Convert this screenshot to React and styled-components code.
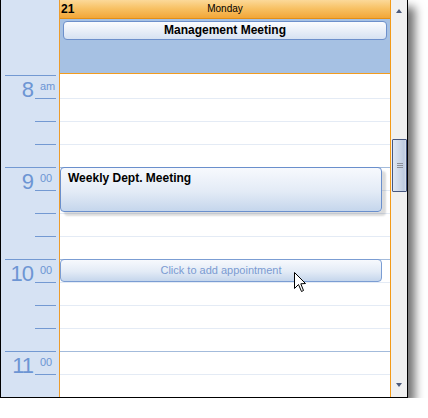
import React from "react";
import styled, { createGlobalStyle } from "styled-components";

const SLOT = 23;
const hours = [
  { n: "8", s: "am" },
  { n: "9", s: "00" },
  { n: "10", s: "00" },
  { n: "11", s: "00" },
];

const GlobalStyle = createGlobalStyle`
  * { box-sizing: border-box; }
  body {
    margin: 0;
    background: #fff;
    font-family: "Liberation Sans", Arial, sans-serif;
  }
`;

const Window = styled.div`
  width: 408px;
  height: 398px;
  display: flex;
  background: #fff;
  border: 1px solid #000;
  border-top: none;
  box-shadow: 7px 7px 9px rgba(0, 0, 0, 0.55);
`;

/* time ruler on the left */
const TimeCol = styled.div`
  width: 58px;
  flex: none;
  padding-top: 75px;
  background: #d6e2f3;
  color: #6d95d3;
  overflow: hidden;
`;

const HourBlock = styled.div`
  flex: none;
  width: 51px;
  height: 92px;
  margin-left: 4px;
  border-top: 1px solid #7399d2;
`;

const HourHead = styled.div`
  display: flex;
  height: 23px;
`;

const HourNum = styled.div`
  width: 29px;
  align-self: flex-end;
  text-align: right;
  font-size: 22px;
  line-height: 18px;
  letter-spacing: -1px;
  padding-right: 1px;
`;

const HourSuffix = styled.div`
  margin-left: 1px;
  flex: 1;
  padding: 5px 0 0 5px;
  border-bottom: 1px solid #7399d2;
  font-size: 11px;
  line-height: 11px;
`;

const Tick = styled.div`
  height: 23px;
  margin-left: 30px;
  border-bottom: 1px solid #7399d2;
`;

/* day column */
const DayCol = styled.div`
  width: 332px;
  flex: none;
  display: flex;
  flex-direction: column;
  border-left: 1px solid #eb9b2c;
  border-right: 1px solid #f39a16;
  overflow: hidden;
`;

const DayHeader = styled.div`
  height: 19px;
  flex: none;
  display: grid;
  grid-template-columns: 1fr auto 1fr;
  align-items: center;
  padding: 0 1px;
  border-bottom: 1px solid #e48f16;
  background: linear-gradient(#fcd999, #f8c266 45%, #f2a638);
  line-height: 18px;
  color: #000;
`;

const DayNum = styled.span`
  font-size: 12px;
  font-weight: bold;
`;

const DayName = styled.span`
  font-size: 10px;
`;

const AllDay = styled.div`
  height: 55px;
  flex: none;
  padding: 2px 3px 0;
  background: #a6c1e3;
  border-bottom: 1px solid #f39c1e;
`;

const Banner = styled.div`
  height: 19px;
  border: 1px solid #6d90cb;
  border-radius: 4px;
  background: linear-gradient(#fbfcfe, #e9eff8 50%, #d6e2f2);
  text-align: center;
  font-size: 12px;
  font-weight: bold;
  line-height: 17px;
  color: #000;
`;

const Grid = styled.div`
  position: relative;
  flex: 1;
  padding-top: 1px;
`;

const Slot = styled.div`
  height: ${SLOT}px;
  border-top: 1px solid ${(p) => (p.$first ? "#fff" : p.$hour ? "#a3bbdb" : "#e4ebf5")};
`;

const Appt = styled.div`
  position: absolute;
  left: 0;
  width: 322px;
  border: 1px solid ${(p) => (p.$ghost ? "#7b9dd3" : "#6a8fcc")};
  border-radius: 4px;
  background: linear-gradient(#f7f9fd, #e3ebf6 55%, #c5d6ec);
  box-shadow: ${(p) => (p.$ghost ? "none" : "4px 4px 2px rgba(0, 0, 0, 0.14)")};
  font-size: ${(p) => (p.$ghost ? "11px" : "12px")};
  font-weight: ${(p) => (p.$ghost ? "normal" : "bold")};
  color: ${(p) => (p.$ghost ? "#7b9bd2" : "#000")};
  text-align: ${(p) => (p.$ghost ? "center" : "left")};
  line-height: ${(p) => (p.$ghost ? "20px" : "14px")};
  padding: ${(p) => (p.$ghost ? "0" : "3px 7px")};
`;

const Pointer = styled.svg`
  position: absolute;
  left: 234px;
  top: 198px;
`;

/* scrollbar */
const Scroll = styled.div`
  width: 16px;
  flex: none;
  display: flex;
  flex-direction: column;
  background: #f0f0f0;
`;

const ArrowBtn = styled.div`
  height: 17px;
  flex: none;
  display: flex;
  justify-content: center;
  align-items: ${(p) => (p.$down ? "flex-start" : "flex-end")};
  padding: ${(p) => (p.$down ? "3px 0 0" : "0 0 4px")};

  &::before {
    content: "";
    border-left: 3.5px solid transparent;
    border-right: 3.5px solid transparent;
    ${(p) => (p.$down ? "border-top" : "border-bottom")}: 4px solid #4d5b7c;
  }
`;

const Track = styled.div`
  flex: 1;
  padding: 122px 0 0 1px;
`;

const Thumb = styled.div`
  width: 15px;
  height: 53px;
  display: flex;
  flex-direction: column;
  align-items: center;
  justify-content: center;
  gap: 1px;
  border: 1px solid #47577f;
  border-radius: 1px;
  background: linear-gradient(to right, #dfe6f1, #cbd6e7 55%, #bccadf 85%, #d8e0ec);
`;

const Grip = styled.div`
  width: 6px;
  height: 1px;
  background: #8a8f99;
`;

const Cursor = () => (
  <Pointer width="13" height="21" viewBox="0 0 13 21">
    <path
      d="M0.5 0.5 L0.5 16.5 L4.5 12.5 L7.5 19.5 L9.5 18.5 L6.8 11.8 L11.5 11.5 Z"
      fill="#fff"
      stroke="#000"
      strokeWidth="1"
      strokeLinejoin="miter"
    />
  </Pointer>
);

const App = () => {
  const slots = Array.from({ length: 15 }, (_, i) => i);
  return (
    <>
      <GlobalStyle />
      <Window>
        <TimeCol>
          {hours.map((h) => (
            <HourBlock key={h.n}>
              <HourHead>
                <HourNum>{h.n}</HourNum>
                <HourSuffix>{h.s}</HourSuffix>
              </HourHead>
              <Tick />
              <Tick />
            </HourBlock>
          ))}
        </TimeCol>

        <DayCol>
          <DayHeader>
            <DayNum>21</DayNum>
            <DayName>Monday</DayName>
            <span />
          </DayHeader>
          <AllDay>
            <Banner>Management Meeting</Banner>
          </AllDay>
          <Grid>
            {slots.map((i) => (
              <Slot key={i} $first={i === 0} $hour={i % 4 === 0} />
            ))}
            <Appt style={{ top: 1 + SLOT * 4, height: 45 }}>Weekly Dept. Meeting</Appt>
            <Appt $ghost style={{ top: 1 + SLOT * 8, height: 23 }}>
              Click to add appointment
            </Appt>
            <Cursor />
          </Grid>
        </DayCol>

        <Scroll>
          <ArrowBtn />
          <Track>
            <Thumb>
              <Grip />
              <Grip />
              <Grip />
            </Thumb>
          </Track>
          <ArrowBtn $down />
        </Scroll>
      </Window>
    </>
  );
};

export default App;
